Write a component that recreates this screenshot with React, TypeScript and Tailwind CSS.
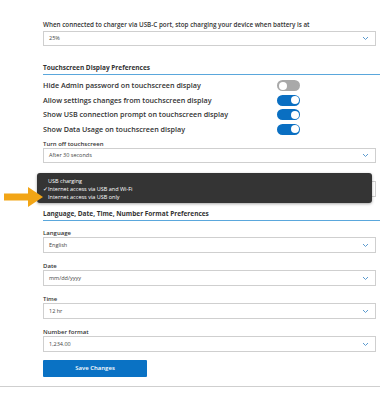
import React from 'react';

const font = { fontFamily: '"Open Sans", "Liberation Sans", sans-serif' };

const Chevron: React.FC = () => (
  <svg width="7" height="5" viewBox="0 0 7 5" className="shrink-0">
    <polyline points="1,1 3.5,3.5 6,1" fill="none" stroke="#5b9bd0" strokeWidth="1" />
  </svg>
);

const Select: React.FC<{ value?: string; h?: string }> = ({ value, h = 'h-[15px]' }) => (
  <div className={`${h} border border-[#cfcfcf] bg-white flex items-center justify-between pl-[5px] pr-[6px]`}>
    <span className="text-[5.5px] text-[#444]">{value}</span>
    <Chevron />
  </div>
);

const Toggle: React.FC<{ on: boolean }> = ({ on }) => (
  <div
    className={`w-[23px] h-[11px] rounded-full flex items-center px-[1.5px] ${
      on ? 'bg-[#0a6fc2] justify-end' : 'bg-[#a9a9a9] justify-start'
    }`}
  >
    <div className="w-[8px] h-[8px] rounded-full bg-white" />
  </div>
);

const Field: React.FC<{ label: string; value: string }> = ({ label, value }) => (
  <div className="flex flex-col">
    <div className="h-[8px] leading-[8px] text-[6px] font-semibold text-[#333]">{label}</div>
    <Select value={value} h="h-[16px]" />
  </div>
);

const SectionTitle: React.FC<{ children: React.ReactNode }> = ({ children }) => (
  <div className="border-b-[1.5px] border-[#5aa7dc] pb-[1px] -mr-[4px]">
    <div className="h-[10px] leading-[10px] text-[6.5px] font-bold text-[#333]">{children}</div>
  </div>
);

const toggles = [
  { label: 'Hide Admin password on touchscreen display', on: false },
  { label: 'Allow settings changes from touchscreen display', on: true },
  { label: 'Show USB connection prompt on touchscreen display', on: true },
  { label: 'Show Data Usage on touchscreen display', on: true },
];

export default function App() {
  return (
    <div className="relative w-[380px] h-[400px] bg-white overflow-hidden" style={font}>
      <div className="pl-[43px] pr-[4px] pt-[21px]">
        <div className="h-[8px] leading-[8px] text-[6.3px] font-semibold text-[#333]">
          When connected to charger via USB-C port, stop charging your device when battery is at
        </div>
        <div className="mt-[2px]">
          <Select value="25%" />
        </div>

        <div className="mt-[17px]">
          <SectionTitle>Touchscreen Display Preferences</SectionTitle>
        </div>

        <div className="mt-[3.5px] flex flex-col">
          {toggles.map((t) => (
            <div key={t.label} className="h-[14.5px] flex items-center">
              <span className="w-[234px] text-[7.2px] font-semibold text-[#333]">{t.label}</span>
              <Toggle on={t.on} />
            </div>
          ))}
        </div>

        <div className="mt-[3px] h-[8px] leading-[8px] text-[6px] font-semibold text-[#333]">Turn off touchscreen</div>
        <Select value="After 30 seconds" />

        {/* label of this field sits under the open menu */}
        <div className="mt-[6px] h-[8px]" />
        <div className="mt-[4px]">
          <Select value="Internet access via USB and Wi-Fi" h="h-[16px]" />
        </div>

        <div className="mt-[12px]">
          <SectionTitle>Language, Date, Time, Number Format Preferences</SectionTitle>
        </div>

        <div className="mt-[8.5px] flex flex-col gap-[9px]">
          <Field label="Language" value="English" />
          <Field label="Date" value="mm/dd/yyyy" />
          <Field label="Time" value="12 hr" />
          <Field label="Number format" value="1,234.00" />
        </div>

        <button className="mt-[7px] w-[104px] h-[17px] bg-[#0a72c4] text-white text-[6px] font-semibold rounded-[1px]">
          Save Changes
        </button>
      </div>

      <div className="mt-[9px] border-t border-[#cfcfcf]" />

      {/* open dropdown */}
      <div className="absolute left-[37px] top-[173px] w-[335px] h-[30px] rounded-[3px] bg-[#343434] shadow-[0_1px_3px_rgba(0,0,0,0.35)] pt-[4px] text-white text-[5.5px] leading-[8px]">
        <div className="pl-[11px]">USB charging</div>
        <div className="pl-[6px] flex">
          <span className="w-[5px]">✓</span>
          <span>Internet access via USB and Wi-Fi</span>
        </div>
        <div className="pl-[11px]">Internet access via USB only</div>
      </div>

      {/* pointer arrow */}
      <svg className="absolute left-[4px] top-[186px]" width="40" height="22" viewBox="0 0 40 22">
        <rect x="0" y="7.5" width="26" height="7" fill="#f2a516" />
        <polygon points="24,1 39,11 24,21" fill="#f2a516" />
      </svg>
    </div>
  );
}
